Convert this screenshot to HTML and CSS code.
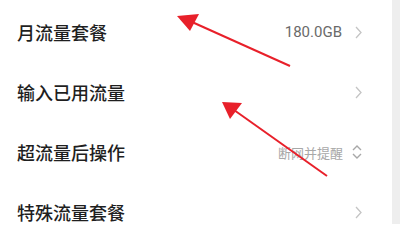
FILE: index.html
```html
<!DOCTYPE html>
<html lang="zh-CN">
<head>
<meta charset="utf-8">
<link rel="stylesheet" href="styles.css">
</head>
<body>
<div class="page">
  <div class="list">
    <div class="row">
      <span class="title">月流量套餐</span>
      <span class="right"><span class="value num">180.0GB</span>
        <svg class="chev" width="7" height="13" viewBox="0 0 7 13"><path d="M1 1 L6 6.5 L1 12" fill="none" stroke="#c4c4c4" stroke-width="1.3"/></svg>
      </span>
    </div>
    <div class="row">
      <span class="title">输入已用流量</span>
      <span class="right">
        <svg class="chev" width="7" height="13" viewBox="0 0 7 13"><path d="M1 1 L6 6.5 L1 12" fill="none" stroke="#c4c4c4" stroke-width="1.3"/></svg>
      </span>
    </div>
    <div class="row">
      <span class="title">超流量后操作</span>
      <span class="right"><span class="value light">断网并提醒</span>
        <svg class="updown" width="10" height="16" viewBox="0 0 10 16"><path d="M1 6 L5 2 L9 6 M1 10 L5 14 L9 10" fill="none" stroke="#a8a8a8" stroke-width="1.4"/></svg>
      </span>
    </div>
    <div class="row">
      <span class="title">特殊流量套餐</span>
      <span class="right">
        <svg class="chev" width="7" height="13" viewBox="0 0 7 13"><path d="M1 1 L6 6.5 L1 12" fill="none" stroke="#c4c4c4" stroke-width="1.3"/></svg>
      </span>
    </div>
  </div>
  <div class="scrollbar"></div>
  <svg class="arrows" width="400" height="225" viewBox="0 0 400 225">
    <line x1="290" y1="66" x2="192" y2="22" stroke="#e8202a" stroke-width="2"/>
    <polygon points="177,16 199,14 190,31" fill="#e8202a"/>
    <line x1="327" y1="176" x2="234" y2="110" stroke="#e8202a" stroke-width="2"/>
    <polygon points="222,102 242,103 230,119" fill="#e8202a"/>
  </svg>
</div>
</body>
</html>
```
FILE: styles.css
```css
html, body {
  margin: 0;
  padding: 0;
  background: #ffffff;
}
.page {
  position: relative;
  width: 400px;
  height: 225px;
  display: flex;
  overflow: hidden;
  font-family: "Noto Sans CJK SC", "Noto Sans", sans-serif;
}
.list {
  flex: 1;
  padding-top: 2px;
  padding-left: 17px;
  padding-right: 30px;
}
.row {
  height: 60px;
  display: flex;
  align-items: center;
  justify-content: space-between;
}
.title {
  font-size: 18px;
  font-weight: 500;
  color: #1f1f1f;
}
.right {
  display: flex;
  align-items: center;
}
.value {
  font-size: 14px;
  color: #6a6a6a;
  margin-right: 13px;
}
.value.num {
  font-family: Roboto, "Noto Sans", sans-serif;
  font-size: 15px;
}
.value.light {
  font-size: 13px;
  color: #a8a8a8;
  margin-right: 9px;
}
.chev {
  display: block;
}
.updown {
  display: block;
}
.scrollbar {
  width: 8px;
  height: 224px;
  background: #eeeeee;
}
.arrows {
  position: absolute;
  left: 0;
  top: 0;
}
```
